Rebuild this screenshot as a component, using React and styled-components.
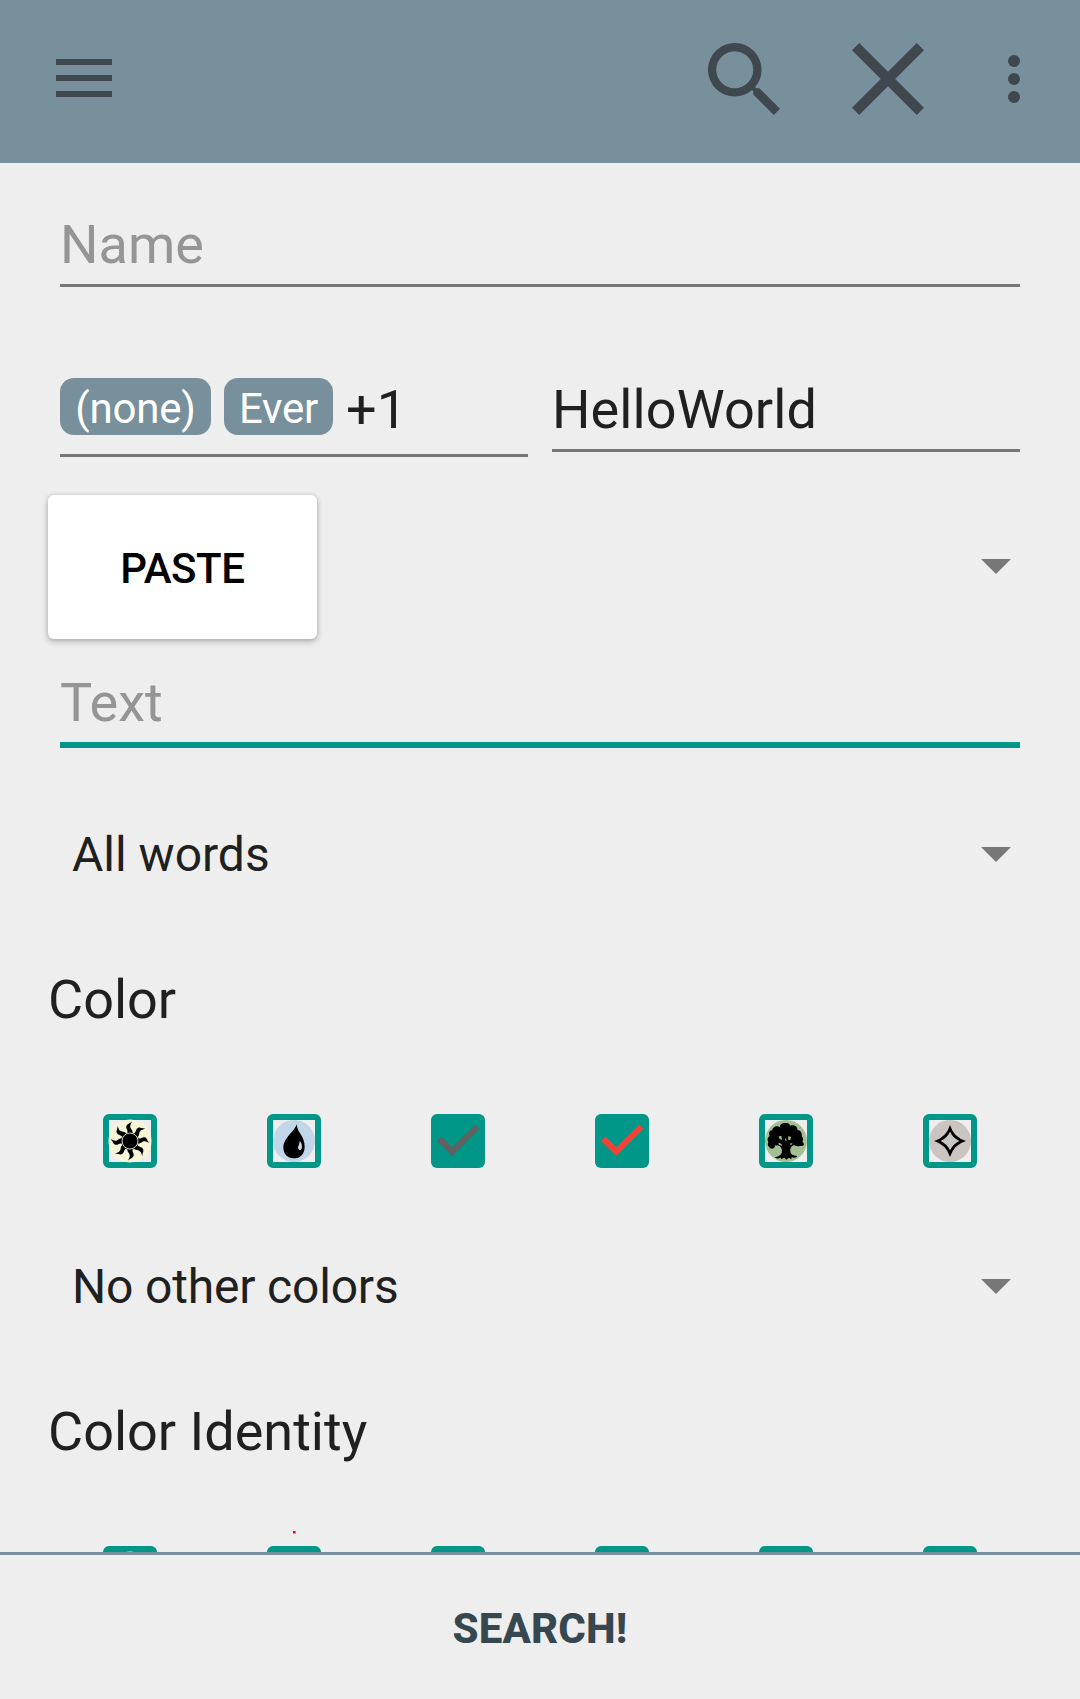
import React from "react";
import styled, { createGlobalStyle } from "styled-components";

const GlobalStyle = createGlobalStyle`
  body { margin: 0; background: #eeeeee; }
  *, *::before, *::after { box-sizing: border-box; }
  button { border: 0; padding: 0; background: none; font: inherit; color: inherit; }
  svg { display: block; flex: none; }
`;

const Screen = styled.div`
  width: 1080px;
  height: 1699px;
  display: flex;
  flex-direction: column;
  overflow: hidden;
  background: #eeeeee;
  color: #202020;
  font-family: Roboto, "Noto Sans", sans-serif;
`;

const Toolbar = styled.header`
  flex: none;
  height: 163px;
  padding: 0 60px 5px 56px;
  display: flex;
  align-items: center;
  background: #78909c;
  color: #3e484e;
`;

const MenuButton = styled.button`
  width: 56px;
  height: 38px;
  display: flex;
  flex-direction: column;
  justify-content: space-between;
  margin-right: auto;
  margin-top: -2px;
`;

const MenuBar = styled.span`
  height: 6px;
  background: currentColor;
`;

const Actions = styled.div`
  display: flex;
  align-items: center;
`;

const IconButton = styled.button`
  display: flex;
  margin-left: ${(p) => p.$gap || 0}px;
`;

const Form = styled.main`
  flex: 1;
  min-height: 0;
  overflow: hidden;
  padding: 0 48px;
`;

const Field = styled.div`
  margin: 0 12px;
  padding: ${(p) => p.$top}px 0 7px;
  border-bottom: ${(p) => (p.$focused ? "6px solid #009688" : "3px solid #777777")};
  font-size: 54px;
  line-height: 64px;
  color: #959595;
`;

const SplitRow = styled.div`
  display: grid;
  grid-template-columns: 1fr 1fr;
  align-items: start;
  gap: 24px;
  margin: 91px 12px 0;
`;

const SplitField = styled.div`
  padding-bottom: ${(p) => p.$bottom}px;
  border-bottom: 3px solid #777777;
  display: flex;
  font-size: 54px;
  line-height: 63px;
  letter-spacing: 0.1px;
`;

const Chip = styled.span`
  height: 57px;
  width: ${(p) => p.$width}px;
  margin-right: 13px;
  display: flex;
  justify-content: center;
  border-radius: 14px;
  background: #78909c;
  color: #ffffff;
  font-size: 42px;
  line-height: 61px;
  letter-spacing: -0.2px;
`;

const ActionRow = styled.div`
  display: flex;
  justify-content: space-between;
  align-items: center;
  margin-top: 38px;
  padding-right: 21px;
`;

const PasteButton = styled.button`
  width: 269px;
  height: 144px;
  padding-top: 2px;
  border-radius: 6px;
  background: #ffffff;
  color: #000000;
  font-size: 42px;
  font-weight: 500;
  letter-spacing: -0.4px;
  box-shadow: 0 3px 6px rgba(0, 0, 0, 0.22), 0 0 5px rgba(0, 0, 0, 0.14);
`;

const SpinnerRow = styled.div`
  height: 144px;
  margin-top: ${(p) => p.$top || 0}px;
  padding: 0 21px 2px 24px;
  display: flex;
  align-items: center;
  justify-content: space-between;
  font-size: 48px;
  letter-spacing: ${(p) => p.$tracking || 0}px;
`;

const Heading = styled.h2`
  margin: 0;
  height: 144px;
  padding-top: 1px;
  font-size: 54px;
  font-weight: 400;
  line-height: 144px;
`;

const CheckRow = styled.div`
  height: 144px;
  padding-top: 43px;
  display: grid;
  grid-template-columns: repeat(6, 1fr);
  justify-items: center;
  align-items: start;
`;

const Box = styled.span`
  position: relative;
  width: 54px;
  height: 54px;
  display: flex;
  border: ${(p) => (p.$checked ? 0 : 6)}px solid #009688;
  border-radius: 6px;
  background: ${(p) => (p.$checked ? "#009688" : "transparent")};
`;

const Marker = styled.i`
  position: absolute;
  left: 20px;
  top: -21px;
  width: 3px;
  height: 3px;
  border: solid #f08098;
  border-width: 0 1px 1px 0;
  background: #d5002c;
`;

const Footer = styled.footer`
  flex: none;
  height: 147px;
  border-top: 3px solid #78909c;
  display: flex;
`;

const SearchButton = styled.button`
  flex: 1;
  padding-top: 3px;
  color: #37474f;
  font-size: 42px;
  font-weight: 800;
  letter-spacing: 0.15px;
`;

const ArrowShape = styled.svg`
  margin-bottom: ${(p) => p.$lift || 0}px;
`;

const ManaIcon = styled.svg`
  overflow: visible;
`;

const Arrow = ({ lift }) => (
  <ArrowShape $lift={lift} width="30" height="15" viewBox="0 0 30 15">
    <path d="M0 0h30L15 15z" fill="#777777" />
  </ArrowShape>
);

const Check = ({ color }) => (
  <svg width="54" height="54" viewBox="0 0 162 162">
    <path d="M19 81L32 68L64 100L133 32L145 44L64 125Z" fill={color} stroke={color} strokeWidth="2" />
  </svg>
);

const Mana = ({ fill, radius = 63, children }) => (
  <ManaIcon width="42" height="42" viewBox="0 0 126 126">
    <circle cx="63" cy="63" r={radius} fill={fill} />
    {children}
  </ManaIcon>
);

const Sun = () => (
  <Mana fill="#f8f6d8" radius={64.5}>
    {[0, 45, 90, 135, 180, 225, 270, 315].map((a) => (
      <path
        key={a}
        transform={`rotate(${a} 63 63)`}
        d="M55 40C58 29 50 28 52 19C54 11 63 12 69 4C67 11 62 15 64 22C66 29 71 29 71 40Z"
      />
    ))}
    <circle cx="63" cy="63" r="26.5" />
    <circle cx="63" cy="63" r="24" fill="none" stroke="#f8f6d8" strokeWidth="2.6" />
  </Mana>
);

const Drop = () => (
  <Mana fill="#c1d7e9">
    <path d="M71 13C72 24 76 33 83 43C90 54 95 66 95 80C95 102 82 115 62 115C44 115 31 103 31 82C31 68 40 56 50 43C60 32 68 24 71 13Z" />
    <path d="M80 63C86 68 88 77 86 86C83 93 75 91 75 82C76 76 80 72 80 63Z" fill="#c1d7e9" />
  </Mana>
);

const Tree = () => (
  <Mana fill="#a3c095">
    <path d="M44 21C45 12 54 8 61 9C70 8 74 12 76 17C87 13 98 20 97 29C109 32 112 41 110 48C116 55 115 61 112 65C121 72 116 80 106 77C98 81 91 77 86 75C78 79 75 85 76 95C77 103 84 106 96 108C97 113 87 114 80 112L79 118L72 113L64 119L58 113L48 118L47 113C40 116 31 116 30 112C38 109 48 106 50 98C53 87 48 79 38 76C34 77 32 77 30 76C31 86 18 90 13 82C7 78 8 70 10 67C6 59 8 51 14 48C9 37 15 31 22 31C22 22 35 15 44 21Z" />
    <path d="M40 50L49 47L51 60L45 57ZM70 48L78 51L76 59L70 61ZM59 60L63 54L65 62ZM40 68L49 71L52 77L42 74ZM74 71L83 69L78 76Z" fill="#a3c095" />
  </Mana>
);

const Colorless = () => (
  <Mana fill="#cac5c0">
    <path
      fillRule="evenodd"
      d="M63 15Q74 52 111 63Q74 74 63 111Q52 74 15 63Q52 52 63 15ZM63 35Q54 54 35 63Q54 72 63 91Q72 72 91 63Q72 54 63 35Z"
    />
  </Mana>
);

export default function App() {
  return (
    <>
      <GlobalStyle />
      <Screen>
        <Toolbar>
          <MenuButton aria-label="Menu">
            <MenuBar />
            <MenuBar />
            <MenuBar />
          </MenuButton>
          <Actions>
            <IconButton aria-label="Search">
              <svg width="72" height="72" viewBox="3 3 17.49 17.49" fill="currentColor">
                <path d="M15.5 14h-.79l-.28-.27A6.471 6.471 0 0 0 16 9.5 6.5 6.5 0 1 0 9.5 16c1.61 0 3.09-.59 4.23-1.57l.27.28v.79l5 4.99L20.49 19l-4.99-5zm-6 0C7.01 14 5 11.99 5 9.5S7.01 5 9.5 5 14 7.01 14 9.5 11.99 14 9.5 14z" />
              </svg>
            </IconButton>
            <IconButton aria-label="Clear" $gap={72}>
              <svg width="72" height="72" viewBox="5 5 14 14" fill="currentColor">
                <path d="M19 6.41L17.59 5 12 10.59 6.41 5 5 6.41 10.59 12 5 17.59 6.41 19 12 13.41 17.59 19 19 17.59 13.41 12z" />
              </svg>
            </IconButton>
            <IconButton aria-label="More options" $gap={84}>
              <svg width="12" height="48" viewBox="0 0 12 48" fill="currentColor">
                <circle cx="6" cy="6" r="6" />
                <circle cx="6" cy="24" r="6" />
                <circle cx="6" cy="42" r="6" />
              </svg>
            </IconButton>
          </Actions>
        </Toolbar>
        <Form>
          <Field $top={50}>Name</Field>
          <SplitRow>
            <SplitField $bottom={13}>
              <Chip $width={151}>(none)</Chip>
              <Chip $width={109}>Ever</Chip>
              <span>+1</span>
            </SplitField>
            <SplitField $bottom={8}>HelloWorld</SplitField>
          </SplitRow>
          <ActionRow>
            <PasteButton>PASTE</PasteButton>
            <Arrow lift={2} />
          </ActionRow>
          <Field $top={32} $focused>Text</Field>
          <SpinnerRow $top={35}>
            <span>All words</span>
            <Arrow />
          </SpinnerRow>
          <Heading>Color</Heading>
          <CheckRow>
            <Box><Sun /></Box>
            <Box><Drop /></Box>
            <Box $checked><Check color="#616161" /></Box>
            <Box $checked><Check color="#f44336" /></Box>
            <Box><Tree /></Box>
            <Box><Colorless /></Box>
          </CheckRow>
          <SpinnerRow $tracking={-0.18}>
            <span>No other colors</span>
            <Arrow />
          </SpinnerRow>
          <Heading>Color Identity</Heading>
          <CheckRow>
            <Box><Sun /></Box>
            <Box><Drop /><Marker /></Box>
            <Box />
            <Box />
            <Box><Tree /></Box>
            <Box><Colorless /></Box>
          </CheckRow>
        </Form>
        <Footer>
          <SearchButton>SEARCH!</SearchButton>
        </Footer>
      </Screen>
    </>
  );
}
